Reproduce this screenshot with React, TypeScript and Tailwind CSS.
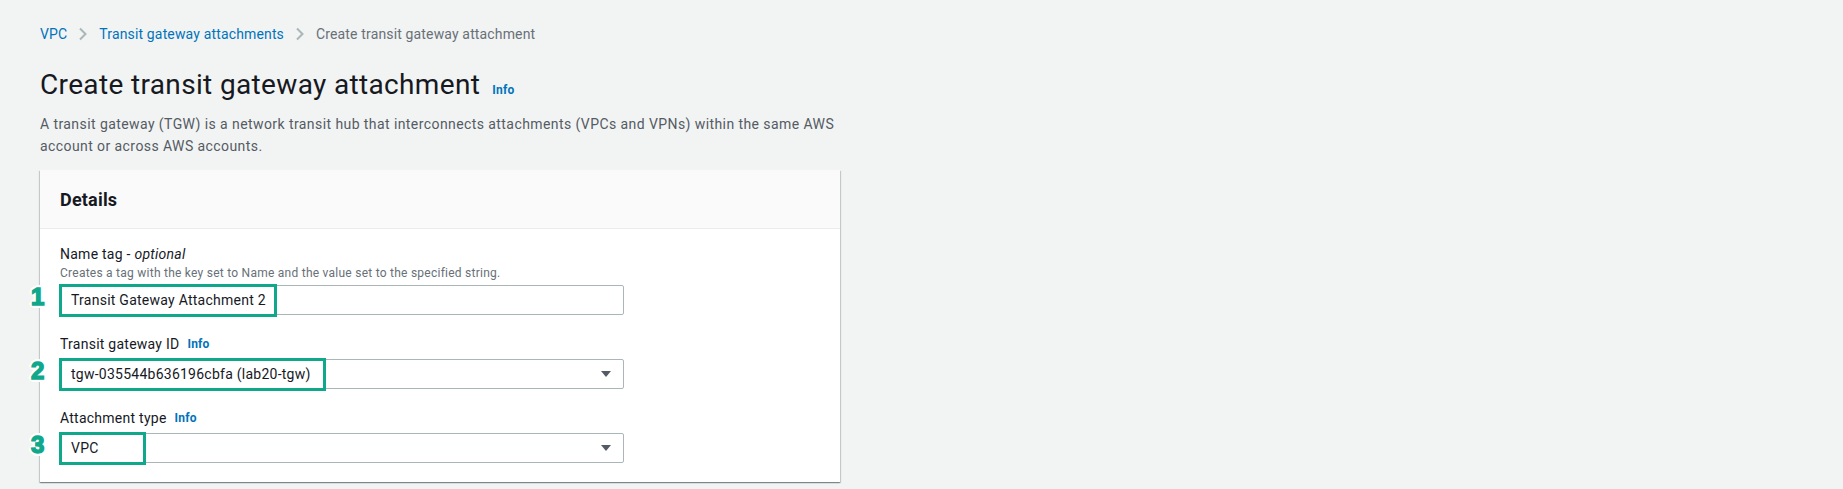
import React from "react";

const font = { fontFamily: "Roboto, 'Liberation Sans', sans-serif" };

function Chevron() {
  return (
    <svg width="10" height="14" viewBox="0 0 10 14" className="mx-[11px]">
      <path d="M2 1.5 L7.5 7 L2 12.5" fill="none" stroke="#aab7b8" strokeWidth="2" />
    </svg>
  );
}

function Info() {
  return <span className="text-[12px] font-bold text-[#0073bb] leading-[16px] tracking-[0.2px]">Info</span>;
}

function Marker({ n }: { n: string }) {
  return (
    <span
      className="absolute left-[-29px] top-[calc(50%-3px)] -translate-y-1/2 text-[24px] font-bold leading-none text-[#10a88b]"
      style={{
        fontFamily: "'Liberation Sans', Arial, sans-serif",
        WebkitTextStroke: "1.5px #10a88b",
        textShadow:
          "3px 0 0 #fff, -3px 0 0 #fff, 0 3px 0 #fff, 0 -3px 0 #fff, 2px 2px 0 #fff, -2px -2px 0 #fff, 2px -2px 0 #fff, -2px 2px 0 #fff",
      }}
    >
      {n}
    </span>
  );
}

function Arrow() {
  return (
    <svg width="12" height="8" viewBox="0 0 12 8" className="absolute right-[12px] top-1/2 -translate-y-1/2">
      <path d="M1 1 L11 1 L6 7 Z" fill="#545b64" />
    </svg>
  );
}

function Field({
  label,
  info,
  hint,
  value,
  select,
  boxWidth,
  n,
}: {
  label: React.ReactNode;
  info?: boolean;
  hint?: string;
  value: string;
  select?: boolean;
  boxWidth: number;
  n: string;
}) {
  return (
    <div>
      <div className="flex items-center gap-[8px] text-[14px] leading-[22px] tracking-[0.25px] text-[#16191f]">
        <span>{label}</span>
        {info && <Info />}
      </div>
      {hint && <div className="text-[12px] leading-[16px] tracking-[0.25px] text-[#687078]">{hint}</div>}
      <div className="relative mt-[4px] w-[564px]">
        <div className="flex h-[30px] items-center rounded-[2px] border border-[#aab7b8] bg-white pl-[10px] text-[14px] tracking-[0.25px] text-[#16191f]">
          {value}
        </div>
        {select && <Arrow />}
        <div
          className="absolute left-[-1px] top-[-1px] bottom-[-2px] border-[3px] border-[#10a88b]"
          style={{ width: boxWidth }}
        />
        <Marker n={n} />
      </div>
    </div>
  );
}

export default function App() {
  return (
    <div className="min-h-[489px] bg-[#f2f3f3] pl-[40px] pt-[24px]" style={font}>
      <nav className="flex items-center text-[14px] leading-[20px] tracking-[0.15px]">
        <span className="text-[#0073bb]">VPC</span>
        <Chevron />
        <span className="text-[#0073bb]">Transit gateway attachments</span>
        <Chevron />
        <span className="text-[#687078]">Create transit gateway attachment</span>
      </nav>

      <div className="mt-[23px] flex items-baseline gap-[12px]">
        <h1 className="text-[28px] leading-[36px] tracking-[0.35px] text-[#16191f]">Create transit gateway attachment</h1>
        <Info />
      </div>

      <p className="mt-[10px] w-[800px] text-[14px] leading-[22px] tracking-[0.42px] text-[#545b64]">
        A transit gateway (TGW) is a network transit hub that interconnects attachments (VPCs and VPNs) within the same AWS
        account or across AWS accounts.
      </p>

      <div className="mt-[13px] w-[800px] bg-white shadow-[0_1px_1px_0_rgba(0,28,36,0.3),1px_1px_1px_0_rgba(0,28,36,0.15),-1px_1px_1px_0_rgba(0,28,36,0.15)]">
        <div className="flex h-[59px] items-center border-b border-[#eaeded] bg-[#fafafa] px-[20px]">
          <h2 className="text-[18px] font-bold tracking-[0.2px] text-[#16191f]">Details</h2>
        </div>
        <div className="flex flex-col gap-[18px] px-[20px] pb-[19px] pt-[14px]">
          <Field
            label={
              <>
                Name tag - <i>optional</i>
              </>
            }
            hint="Creates a tag with the key set to Name and the value set to the specified string."
            value="Transit Gateway Attachment 2"
            boxWidth={218}
            n="1"
          />
          <Field label="Transit gateway ID" info value="tgw-035544b636196cbfa (lab20-tgw)" select boxWidth={267} n="2" />
          <Field label="Attachment type" info value="VPC" select boxWidth={87} n="3" />
        </div>
      </div>
    </div>
  );
}
